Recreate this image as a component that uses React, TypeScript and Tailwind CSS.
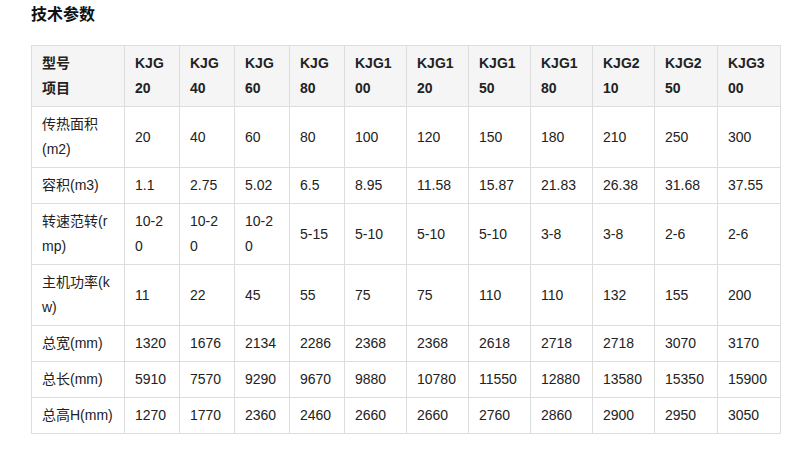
import React from "react";

const header = ["KJG20", "KJG40", "KJG60", "KJG80", "KJG100", "KJG120", "KJG150", "KJG180", "KJG210", "KJG250", "KJG300"];

const rows: [string, string[]][] = [
  ["传热面积(m2)", ["20", "40", "60", "80", "100", "120", "150", "180", "210", "250", "300"]],
  ["容积(m3)", ["1.1", "2.75", "5.02", "6.5", "8.95", "11.58", "15.87", "21.83", "26.38", "31.68", "37.55"]],
  ["转速范转(rmp)", ["10-20", "10-20", "10-20", "5-15", "5-10", "5-10", "5-10", "3-8", "3-8", "2-6", "2-6"]],
  ["主机功率(kw)", ["11", "22", "45", "55", "75", "75", "110", "110", "132", "155", "200"]],
  ["总宽(mm)", ["1320", "1676", "2134", "2286", "2368", "2368", "2618", "2718", "2718", "3070", "3170"]],
  ["总长(mm)", ["5910", "7570", "9290", "9670", "9880", "10780", "11550", "12880", "13580", "15350", "15900"]],
  ["总高H(mm)", ["1270", "1770", "2360", "2460", "2660", "2660", "2760", "2860", "2900", "2950", "3050"]],
];

const widths = [93, 55, 55, 55, 55, 62, 62, 62, 62, 62, 63, 63];

export default function App() {
  return (
    <div
      className="w-[800px] h-[451px] bg-white px-[31px] text-[#222]"
      style={{ fontFamily: '"Liberation Sans", Arial, "Noto Sans CJK SC", sans-serif' }}
    >
      <div className="h-[45px] pt-[3px] text-[16px] font-bold leading-[24px] text-[#111]">技术参数</div>
      <table className="table-fixed border-collapse w-[750px] text-[14px] leading-[25px]">
        <colgroup>
          {widths.map((w, i) => (
            <col key={i} style={{ width: w }} />
          ))}
        </colgroup>
        <thead>
          <tr className="bg-[#f5f5f5] font-bold">
            <td className="border border-[#dddddd] px-[10px] py-[5px] break-all align-middle">型号<br />项目</td>
            {header.map((h, i) => (
              <td key={i} className="border border-[#dddddd] px-[10px] py-[5px] break-all align-middle">
                {h}
              </td>
            ))}
          </tr>
        </thead>
        <tbody>
          {rows.map(([label, vals], r) => (
            <tr key={r}>
              <td className="border border-[#dddddd] px-[10px] py-[5px] break-all align-middle">{label}</td>
              {vals.map((v, i) => (
                <td key={i} className="border border-[#dddddd] px-[10px] py-[5px] break-all align-middle">
                  {v}
                </td>
              ))}
            </tr>
          ))}
        </tbody>
      </table>
    </div>
  );
}
